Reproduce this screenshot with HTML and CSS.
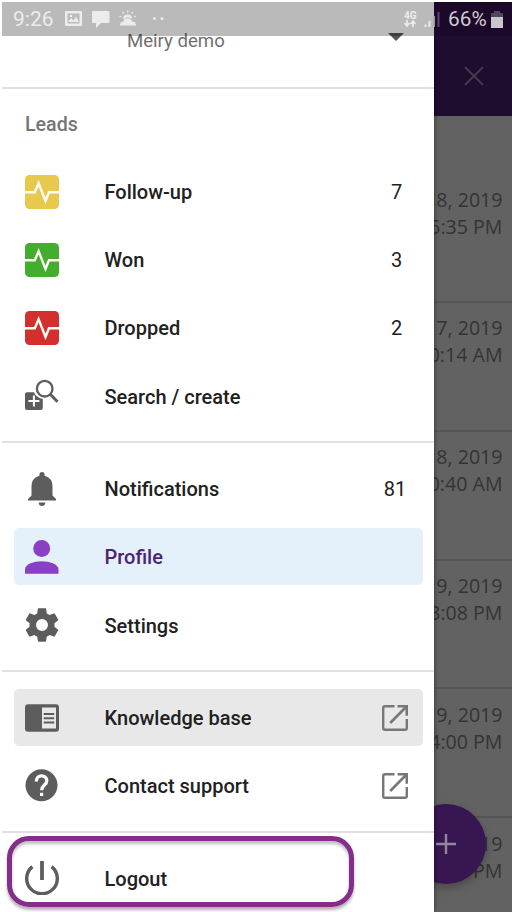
FILE: index.html
```html
<!DOCTYPE html>
<html lang="en">
<head>
<meta charset="utf-8">
<title>Leads</title>
<link rel="stylesheet" href="styles.css">
</head>
<body>
<svg class="defs" width="0" height="0">
  <symbol id="pulse" viewBox="0 0 34 34"><rect width="34" height="34" rx="4.5" fill="currentColor"/><path d="M0 17.2H9.8L13.6 8.2L20.5 26L24 17.2H34" fill="none" stroke="#fffdf5" stroke-width="2.4"/></symbol>
  <symbol id="open" viewBox="0 0 26 26"><path d="M12.500 1.200H3Q1.200 1.200 1.200 3V23Q1.200 24.800 3 24.800H23Q24.800 24.800 24.800 23V14" fill="none" stroke="currentColor" stroke-width="2.4"/><path d="M15.800 0H26V10.500H23.700V4L9.200 18.700L7.500 17L22 2.300H15.800Z" fill="currentColor" stroke="currentColor" stroke-width=".4"/></symbol>
</svg>
<div class="screen">
  <main class="app">
    <header class="topbar"><svg width="20" height="20" viewBox="0 0 20 20"><path d="M1 1L19 19M19 1L1 19" stroke="currentColor" stroke-width="2"/></svg></header>
    <div class="entry">8, 2019<br>5:35 PM</div>
    <div class="entry">7, 2019<br>0:14 AM</div>
    <div class="entry">8, 2019<br>0:40 AM</div>
    <div class="entry">9, 2019<br>3:08 PM</div>
    <div class="entry">9, 2019<br>4:00 PM</div>
    <div class="entry">19<br>PM</div>
    <div class="fab"><svg width="20" height="20" viewBox="0 0 20 20"><path d="M10 0V20M0 10H20" stroke="currentColor" stroke-width="2.4"/></svg></div>
  </main>
  <nav class="drawer">
    <div class="account"><span>Meiry demo</span><i class="caret"></i></div>
    <section class="group">
      <h2>Leads</h2>
      <a class="row"><svg class="icon yellow"><use href="#pulse"/></svg><span>Follow-up</span><b>7</b></a>
      <a class="row"><svg class="icon green"><use href="#pulse"/></svg><span>Won</span><b>3</b></a>
      <a class="row"><svg class="icon red"><use href="#pulse"/></svg><span>Dropped</span><b>2</b></a>
      <a class="row"><svg class="icon" viewBox="0 0 34 34"><path d="M2 13.300H9Q11 18.500 17.800 20V29Q17.800 31 15.800 31H2Q0 31 0 29V15.300Q0 13.300 2 13.300Z" fill="currentColor"/><path d="M8.900 16.500V27.500M3.400 22H14.400" stroke="#fff" stroke-width="2"/><circle cx="19.700" cy="9.700" r="7.800" fill="none" stroke="currentColor" stroke-width="2.300"/><path d="M25.300 15.300L32.500 22.700" stroke="currentColor" stroke-width="3"/></svg><span>Search / create</span></a>
    </section>
    <section class="group">
      <a class="row"><svg class="icon" viewBox="0 0 34 34"><path d="M17 0Q19.500 0 19.600 2.600V3.800Q27.500 6 27.500 14.500V23.500L31 27V28.600H3V27L6.500 23.500V14.500Q6.500 6 14.400 3.800V2.600Q14.500 0 17 0ZM13.600 30.500H20.400Q20 34 17 34Q14 34 13.600 30.500Z" fill="currentColor"/></svg><span>Notifications</span><b class="wide">81</b></a>
      <a class="row active"><svg class="icon" viewBox="0 0 34 34"><circle cx="16.700" cy="8.500" r="8.500" fill="currentColor"/><path d="M0 33.800V29.500C0 24 9 21.200 16.700 21.200S33.500 24 33.500 29.500V33.800Z" fill="currentColor"/></svg><span>Profile</span></a>
      <a class="row"><svg class="icon" viewBox="1.800 1.800 20.400 20.400"><path d="M19.430 12.980c.04-.32.07-.64.07-.98s-.03-.66-.07-.98l2.110-1.650c.19-.15.24-.42.12-.64l-2-3.460c-.12-.22-.39-.3-.61-.22l-2.490 1c-.52-.4-1.080-.73-1.690-.98l-.38-2.650C14.460 2.180 14.250 2 14 2h-4c-.25 0-.46.18-.49.42l-.38 2.650c-.61.25-1.170.59-1.690.98l-2.490-1c-.23-.09-.49 0-.61.22l-2 3.460c-.13.22-.07.49.12.64l2.110 1.650c-.04.32-.07.65-.07.98s.03.66.07.98l-2.110 1.650c-.19.15-.24.42-.12.64l2 3.460c.12.22.39.3.61.22l2.490-1c.52.4 1.080.73 1.690.98l.38 2.650c.03.24.24.42.49.42h4c.25 0 .46-.18.49-.42l.38-2.650c.61-.25 1.170-.59 1.690-.98l2.490 1c.23.09.49 0 .61-.22l2-3.460c.12-.22.07-.49-.12-.64l-2.110-1.650zM12 15.600a3.600 3.600 0 1 1 0-7.200 3.600 3.600 0 0 1 0 7.200z" fill="currentColor"/></svg><span>Settings</span></a>
    </section>
    <section class="group">
      <a class="row hover"><svg class="icon" viewBox="0 0 34 34"><rect y="3.300" width="34" height="27.400" rx="3" fill="currentColor"/><path d="M17 6.500H31V27.500H17Z" fill="#e8e8e8"/><path d="M18.700 13H29.200M18.700 17.200H29.200M18.700 21.400H29.200" stroke="currentColor" stroke-width="2"/></svg><span>Knowledge base</span><svg class="open"><use href="#open"/></svg></a>
      <a class="row"><svg class="icon" viewBox="0 0 34 34"><circle cx="16.500" cy="16.200" r="16" fill="currentColor"/><path d="M11.300 12.500C11.300 5 21.800 5.300 21.800 11.700C21.800 16 16.600 16 16.600 21.200" fill="none" stroke="#fff" stroke-width="3.300"/><path d="M15 23.800H18.200V27H15Z" fill="#fff"/></svg><span>Contact support</span><svg class="open"><use href="#open"/></svg></a>
    </section>
    <section class="group">
      <a class="row"><svg class="icon" viewBox="0 0 34 34"><path d="M17 0V19" stroke="currentColor" stroke-width="3.800"/><path d="M7.400 5.600A15.300 15.300 0 1 0 26.600 5.600" fill="none" stroke="currentColor" stroke-width="3.400"/></svg><span>Logout</span></a>
    </section>
  </nav>
  <div class="highlight"></div>
  <div class="status">
    <span class="time">9:26</span>
    <svg class="notices" width="100" height="18" viewBox="0 0 100 18"><path fill="currentColor" fill-rule="evenodd" d="M1 1H16Q17 1 17 2V15Q17 16 16 16H1Q0 16 0 15V2Q0 1 1 1ZM2.500 3.500V13.500H14.500V3.500ZM3 12L6 8L8.500 10.500L11 6.500L14 12ZM28 1H43Q44.500 1 44.500 2.500V11.500Q44.500 13 43 13H36L31 18V13H28Q27 13 27 11.500V2Q27 1 28 1Z"/><circle cx="6" cy="6" r="1.300" fill="currentColor"/><path d="M55 15.500Q55 12 58 11.500Q60 7.500 63 8.500Q66 8 67 11.500Q71 11.500 71 15.500Z" fill="currentColor"/><path d="M58 8.500A4.700 4.700 0 0 1 67.300 8.500L65 8Q62 6 59.500 9Z" fill="currentColor"/><path d="M62.700 .5V2.500M57.500 2L58.700 3.500M68 2L66.700 3.500M54.500 6L56.300 7M71 6L69.200 7" stroke="currentColor" stroke-width="1.300"/><circle cx="89.500" cy="8.500" r="1.500" fill="currentColor"/><circle cx="97" cy="8.500" r="1.500" fill="currentColor"/></svg>
    <span class="net">4G<svg width="12" height="7" viewBox="0 0 12 7"><path d="M3 0V5M.5 3L3 6L5.500 3M9 7V2M6.500 4L9 1L11.500 4" fill="none" stroke="currentColor" stroke-width="1.700"/></svg></span>
    <svg class="signal" width="16" height="16" viewBox="0 0 16 16"><path d="M1.500 13.500V16M5.500 10V16" stroke="#e6e6e6" stroke-width="2.200"/><path d="M10 5V16" stroke="#aaa" stroke-width="1.800"/><path d="M14.500 1V16" stroke="#54495f" stroke-width="2"/></svg>
    <span class="pct">66%</span>
    <svg class="battery" width="12" height="17" viewBox="0 0 12 17"><path d="M3 0H9V2H12V7H0V2H3Z" fill="#50475b"/><path d="M0 6H12V17H0Z" fill="#c9c5ce"/></svg>
  </div>
</div>
</body>
</html>
```
FILE: styles.css
```css
* { box-sizing: border-box; }
body { margin: 0; background: #fff; font-family: Roboto, sans-serif; }
.defs { position: absolute; }
.screen { position: relative; width: 512px; height: 912px; overflow: hidden; }
.app { height: 910px; margin: 2px 0 0 2px; background: #626262; overflow: hidden; }
.topbar { display: flex; justify-content: flex-end; height: 114px; padding: 64px 28px 0 0; background: #1f0d2f; color: #46384f; }
.entry { height: 128.800px; padding: 11.400px 9.500px 0 0; border-bottom: 2px solid #565656; color: #343434; font: 19.600px/27px "Open Sans", sans-serif; text-align: right; white-space: nowrap; }
.topbar + .entry { height: 187px; padding-top: 70px; }
.fab { position: absolute; left: 406px; top: 804px; width: 80px; height: 80px; border-radius: 50%; background: #371652; color: #93869d; display: flex; align-items: center; justify-content: center; box-shadow: 0 4px 8px rgba(0,0,0,.25); }
.drawer { position: absolute; left: 2px; top: 2px; width: 432px; height: 910px; background: #fff; box-shadow: 0 0 5px rgba(0,0,0,.5); clip-path: inset(0 -8px 0 0); }
.account { display: flex; justify-content: space-between; height: 85px; padding: 28px 30px 0 125px; color: #707070; font-size: 18.600px; line-height: 23px; }
.caret { width: 0; height: 0; margin-top: 3px; border: 8.500px solid transparent; border-top-color: #555; border-bottom: 0; }
.group { display: flex; flex-direction: column; gap: 11.200px; padding: 17px 11.500px 16.500px; border-top: 2px solid #e1e1e1; }
h2 { margin: 6px 11.500px -1.600px; height: 41.500px; color: #757575; font-size: 19.600px; font-weight: 500; line-height: 25px; }
.row { display: flex; align-items: center; flex: none; height: 57px; padding: 0 15px 0 11px; border-radius: 5px; color: #212121; font-size: 20px; font-weight: 500; }
.row span { margin-left: 46px; padding-top: 1px; flex: 1; }
.row b { width: 22px; padding-top: 1px; text-align: center; font-weight: 400; }
.row .wide { width: 25px; }
.icon { width: 34px; height: 34px; flex: none; color: #5d5d5d; }
.open { width: 26px; height: 26px; color: #777; }
.yellow { color: #e9c94d; }
.green { color: #43ad2d; }
.red { color: #d3302d; }
.active { background: #e4f0fa; color: #4b2474; }
.active .icon { color: #8a3fc7; }
.hover { background: #e8e8e8; }
.highlight { position: absolute; left: 7px; top: 836px; width: 347px; height: 71px; border: 5px solid #862d8c; border-radius: 22px; box-shadow: 0 3px 3px rgba(0,0,0,.3), inset 0 3px 3px rgba(0,0,0,.25); }
.status { position: absolute; left: 2px; top: 2px; width: 510px; height: 34px; display: flex; align-items: center; padding-left: 11px; background: linear-gradient(90deg, rgba(0,0,0,.27) 432px, #1c0929 432px); color: #ececec; }
.status > * { flex: none; }
.time { width: 52px; font-size: 21px; line-height: 34px; }
.net { width: 14px; margin-left: 239px; font: bold 10px/9px Roboto, sans-serif; }
.net svg { display: block; }
.signal { margin-left: 6px; }
.pct { margin-left: 8px; width: 43px; color: #cfcad4; font-size: 20.800px; white-space: nowrap; }
```
